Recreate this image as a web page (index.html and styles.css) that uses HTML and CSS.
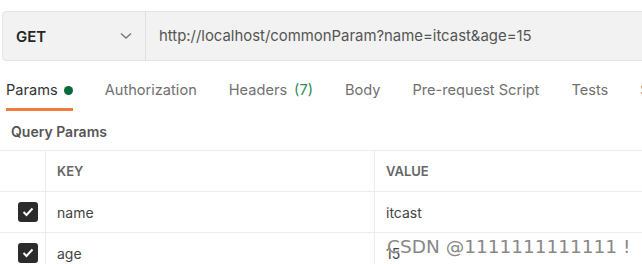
FILE: index.html
```html
<!DOCTYPE html>
<html lang="en">
<head>
    <meta charset="UTF-8">
    <title>Params</title>
    <link rel="stylesheet" href="styles.css">
</head>
<body>
    <div class="request-bar">
        <div class="method">
            <span>GET</span>
            <svg class="chevron" width="12" height="8" viewBox="0 0 12 8"><path d="M1 1.5 L6 6 L11 1.5" fill="none" stroke="#777" stroke-width="1.4"/></svg>
        </div>
        <div class="url">http://localhost/commonParam?name=itcast&amp;age=15</div>
    </div>
    <div class="tabs">
        <div class="tab active">Params <span class="dot"></span></div>
        <div class="tab">Authorization</div>
        <div class="tab">Headers <span class="count">(7)</span></div>
        <div class="tab">Body</div>
        <div class="tab">Pre-request Script</div>
        <div class="tab">Tests</div>
        <div class="tab">Settings</div>
    </div>
    <div class="section-title">Query Params</div>
    <div class="params">
        <div class="row head">
            <div class="cell check"></div>
            <div class="cell key">KEY</div>
            <div class="cell value">VALUE</div>
        </div>
        <div class="row">
            <div class="cell check"><span class="box"><svg width="12" height="10" viewBox="0 0 12 10"><path d="M1.5 5 L4.5 8 L10.5 1.5" fill="none" stroke="#fff" stroke-width="2"/></svg></span></div>
            <div class="cell key">name</div>
            <div class="cell value">itcast</div>
        </div>
        <div class="row">
            <div class="cell check"><span class="box"><svg width="12" height="10" viewBox="0 0 12 10"><path d="M1.5 5 L4.5 8 L10.5 1.5" fill="none" stroke="#fff" stroke-width="2"/></svg></span></div>
            <div class="cell key">age</div>
            <div class="cell value">15<span class="watermark">CSDN @1111111111111 !</span></div>
        </div>
    </div>
</body>
</html>
```
FILE: styles.css
```css
body {
    margin: 0;
    font-family: Inter, "Noto Sans", sans-serif;
    background: #fff;
    color: #6b6b6b;
    overflow: hidden;
    width: 642px;
    height: 264px;
}
.request-bar {
    display: flex;
    margin: 11px 0 0 2px;
    width: 700px;
    height: 48px;
    background: #f2f2f2;
    border: 1px solid #e4e4e4;
    border-radius: 4px;
}
.method {
    display: flex;
    align-items: center;
    justify-content: space-between;
    width: 116px;
    padding: 0 13px 0 13px;
    border-right: 1px solid #e0e0e0;
    font-size: 15px;
    font-weight: 600;
    color: #262626;
}
.url {
    display: flex;
    align-items: center;
    padding-left: 13px;
    font-size: 14.9px;
    color: #555;
}
.tabs {
    display: flex;
    gap: 32px;
    margin: 0 0 0 6px;
    height: 50px;
    white-space: nowrap;
}
.tab {
    display: flex;
    align-items: center;
    font-size: 14.6px;
    color: #707070;
    border-bottom: 3px solid transparent;
    padding-top: 11px;
}
.tab.active {
    color: #333;
    border-bottom-color: #f37a3a;
}
.dot {
    display: inline-block;
    width: 9px;
    height: 9px;
    margin-left: 6px;
    border-radius: 50%;
    background: #0b6a3c;
}
.count { color: #2f8a5d; margin-left: 7px; }
.section-title {
    padding: 12px 0 0 11px;
    height: 27px;
    font-size: 14px;
    font-weight: 600;
    color: #555;
}
.params { border-top: 1px solid #ececec; }
.row {
    display: flex;
    height: 40px;
    border-bottom: 1px solid #ececec;
}
.cell {
    display: flex;
    align-items: center;
    font-size: 14px;
    color: #444;
}
.check { width: 46px; border-right: 1px solid #ececec; justify-content: flex-end; padding-right: 7px; box-sizing: border-box; }
.key { width: 329px; padding-left: 11px; box-sizing: border-box; border-right: 1px solid #ececec; }
.value { padding-left: 11px; position: relative; }
.head .cell { font-size: 13px; font-weight: 600; color: #666; }
.box {
    display: flex;
    align-items: center;
    justify-content: center;
    width: 20px;
    height: 20px;
    border-radius: 3px;
    background: #2b2b2b;
}
.watermark {
    position: absolute;
    left: 12px;
    top: 3px;
    font-family: "DejaVu Sans", sans-serif;
    font-size: 18.5px;
    color: #888;
    white-space: nowrap;
    text-shadow: 0 0 1px #fff;
}
```
